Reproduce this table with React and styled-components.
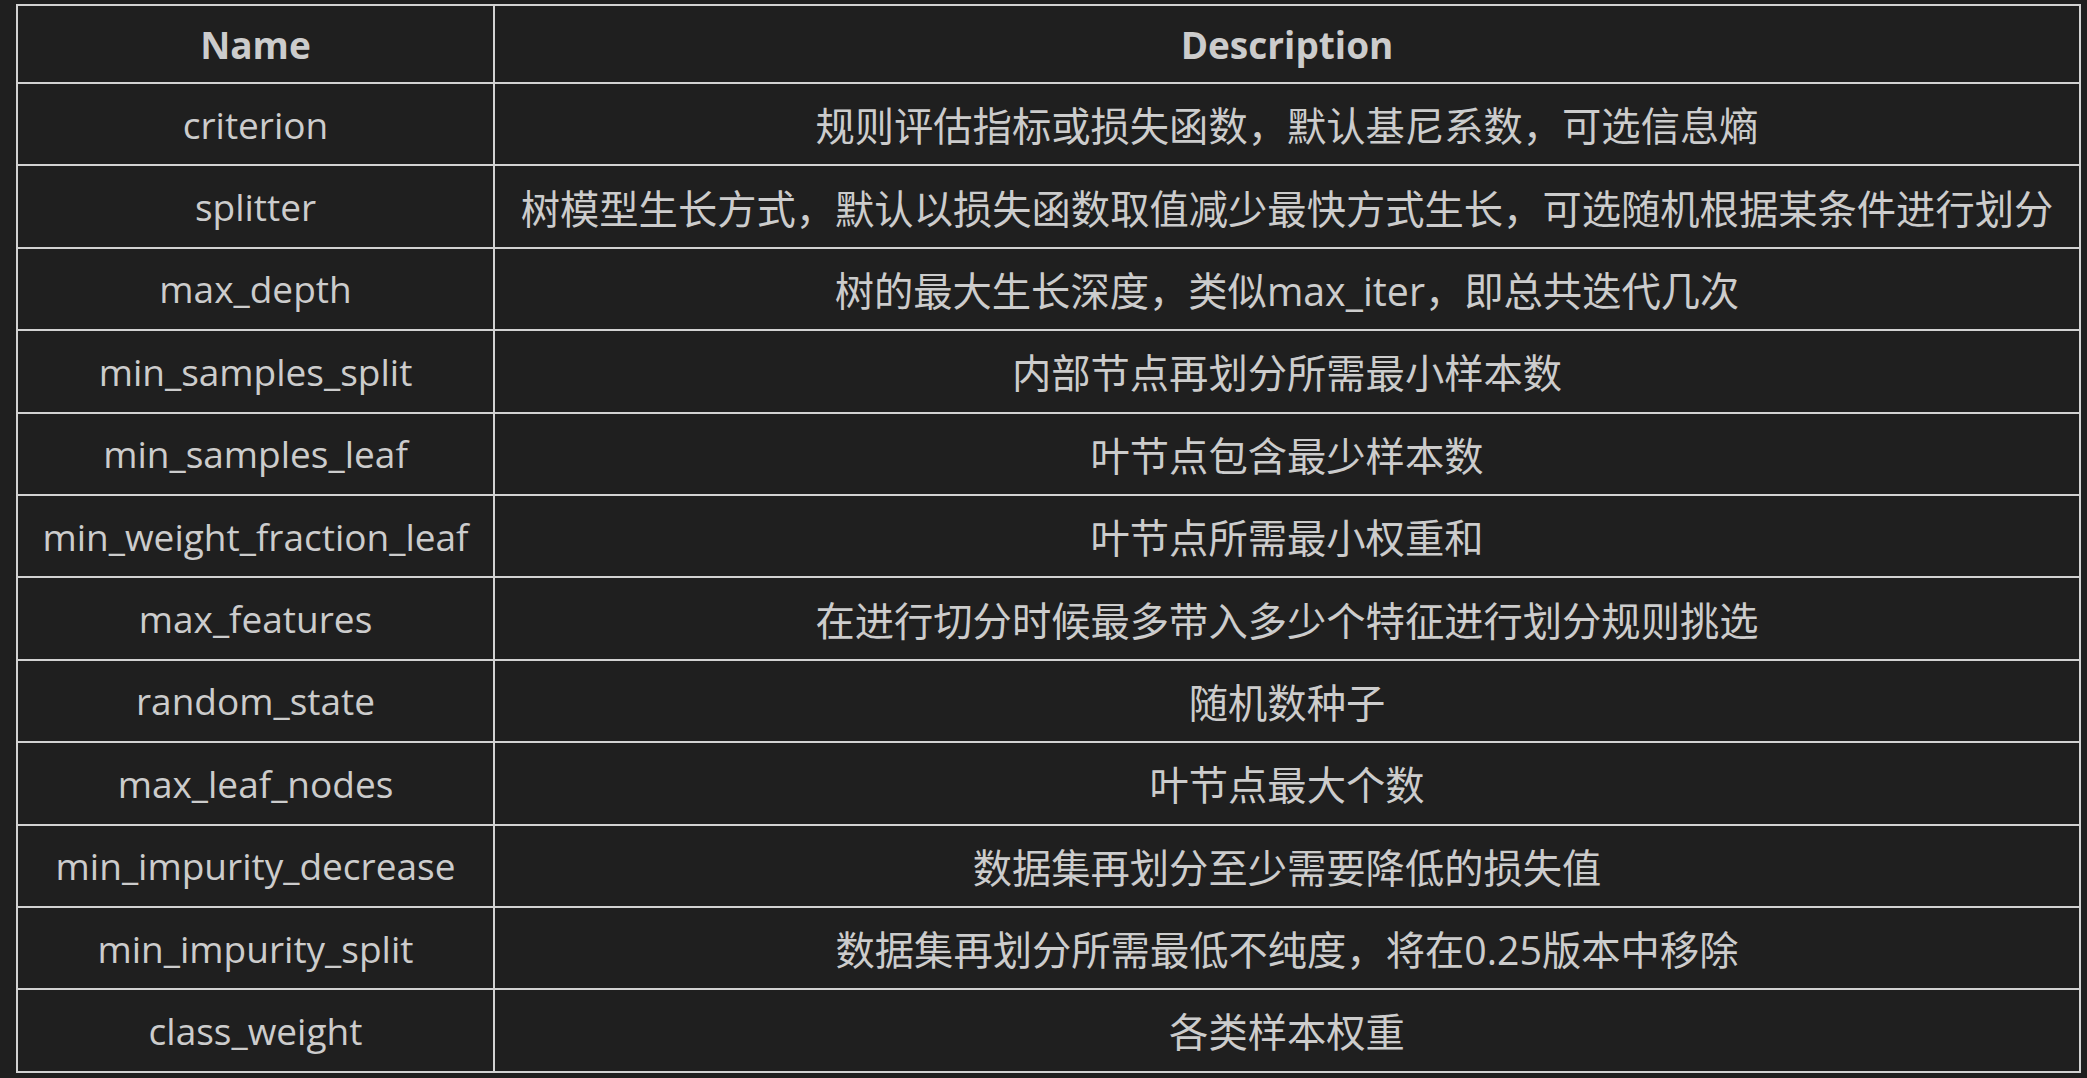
import React from 'react';
import styled, { createGlobalStyle } from 'styled-components';

const GlobalStyle = createGlobalStyle`
  html, body {
    margin: 0;
    padding: 0;
    background: #1f1f1f;
  }
`;

const Page = styled.div`
  min-height: 100vh;
  box-sizing: border-box;
  padding: 4px 0 0 16px;
  background: #1f1f1f;
  color: #cccccc;
  font-family: 'Open Sans', 'Noto Sans CJK SC', sans-serif;
  font-size: 39.3px;
`;

const Table = styled.table`
  border-collapse: collapse;
  table-layout: fixed;
  width: 2059px;
`;

const HeadCell = styled.th`
  height: 76px;
  padding: 0;
  border: 2px solid #d2d2d2;
  font-size: 37px;
  font-weight: 700;
  text-align: center;
  vertical-align: middle;
  white-space: nowrap;
  width: ${props => props.width}px;
`;

const Cell = styled.td`
  height: 80.4px;
  padding: 0;
  border: 2px solid #d2d2d2;
  font-size: ${props => (props.latin ? '37px' : '39.3px')};
  text-align: center;
  vertical-align: middle;
  white-space: nowrap;
`;

const params = [
  ['criterion', '规则评估指标或损失函数，默认基尼系数，可选信息熵'],
  ['splitter', '树模型生长方式，默认以损失函数取值减少最快方式生长，可选随机根据某条件进行划分'],
  ['max_depth', '树的最大生长深度，类似max_iter，即总共迭代几次'],
  ['min_samples_split', '内部节点再划分所需最小样本数'],
  ['min_samples_leaf', '叶节点包含最少样本数'],
  ['min_weight_fraction_leaf', '叶节点所需最小权重和'],
  ['max_features', '在进行切分时候最多带入多少个特征进行划分规则挑选'],
  ['random_state', '随机数种子'],
  ['max_leaf_nodes', '叶节点最大个数'],
  ['min_impurity_decrease', '数据集再划分至少需要降低的损失值'],
  ['min_impurity_split', '数据集再划分所需最低不纯度，将在0.25版本中移除'],
  ['class_weight', '各类样本权重'],
];

export default function App() {
  return (
    <Page>
      <GlobalStyle />
      <Table>
        <thead>
          <tr>
            <HeadCell width={475}>Name</HeadCell>
            <HeadCell width={1584}>Description</HeadCell>
          </tr>
        </thead>
        <tbody>
          {params.map(([name, desc]) => (
            <tr key={name}>
              <Cell latin>{name}</Cell>
              <Cell>{desc}</Cell>
            </tr>
          ))}
        </tbody>
      </Table>
    </Page>
  );
}
